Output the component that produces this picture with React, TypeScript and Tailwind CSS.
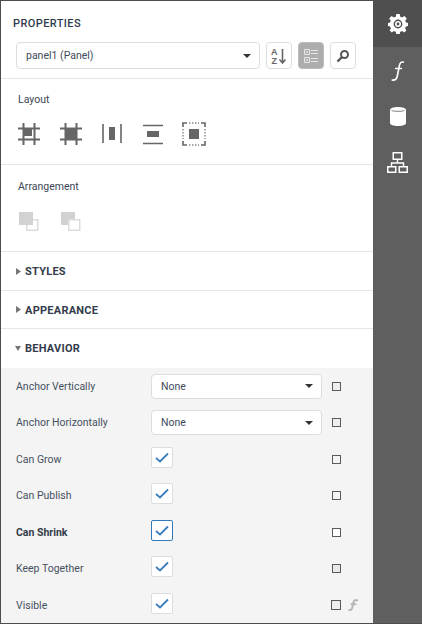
import React from "react";

const font = { fontFamily: 'Roboto, "Open Sans", sans-serif' };

function Caret({ color = "#333" }: { color?: string }) {
  return (
    <svg width="8" height="4" viewBox="0 0 8 4" className="block">
      <path d="M0 0H8L4 4Z" fill={color} />
    </svg>
  );
}

function Select({ text, className }: { text: string; className: string }) {
  return (
    <div className={`flex items-center justify-between border border-[#dddddd] rounded-[4px] bg-white pl-[9px] pr-[8px] text-[10.5px] text-[#3f4a5c] ${className}`}>
      <span className="pt-[1px]">{text}</span>
      <Caret />
    </div>
  );
}

function Section({ title, open, className, textClass }: { title: string; open?: boolean; className: string; textClass: string }) {
  return (
    <div className={`flex items-center pl-[14px] border-b border-[#e6e6e6] ${className}`}>
      <svg width="6" height="7" viewBox="0 0 6 7" className="mr-[4px]">
        {open ? <path d="M0 1H6L3 6Z" fill="#777" /> : <path d="M1 0L6 3.5L1 7Z" fill="#777" />}
      </svg>
      <span className={`text-[11px] font-bold text-[#333c4a] tracking-[0.25px] ${textClass}`}>{title}</span>
    </div>
  );
}

function LayoutIcon({ kind }: { kind: number }) {
  const c = "#666666";
  if (kind === 0 || kind === 1) {
    return (
      <svg width="22" height="22" viewBox="0 0 22 22" className="block">
        <path d="M5.5 0V22M16.5 0V22M0 5.5H22M0 16.5H22" stroke={c} strokeWidth="2" fill="none" />
        {kind === 0 ? <rect x="5" y="5" width="9" height="8" fill={c} /> : <rect x="5" y="5" width="12" height="12" fill={c} />}
      </svg>
    );
  }
  if (kind === 2) {
    return (
      <svg width="20" height="22" viewBox="0 0 20 22" className="block">
        <path d="M1 1V20M19 1V20" stroke={c} strokeWidth="1.6" />
        <rect x="7" y="4" width="6" height="13" fill={c} />
      </svg>
    );
  }
  if (kind === 3) {
    return (
      <svg width="20" height="22" viewBox="0 0 20 22" className="block">
        <path d="M0 2.5H20M0 20.5H20" stroke={c} strokeWidth="1.6" />
        <rect x="4" y="8" width="12" height="6" fill={c} />
      </svg>
    );
  }
  return (
    <svg width="24" height="24" viewBox="0 0 24 24" className="block">
      <path d="M1 5V1H5M19 1H23V5M23 19V23H19M5 23H1V19" stroke={c} strokeWidth="1.6" fill="none" />
      <path d="M7 1H17M7 23H17M1 7V17M23 7V17" stroke="#888" strokeWidth="1.4" strokeDasharray="1.5 1.5" fill="none" />
      <rect x="7" y="7" width="10" height="10" fill={c} />
    </svg>
  );
}

function ArrangeIcon({ front }: { front?: boolean }) {
  return (
    <svg width="20" height="19" viewBox="0 0 20 19" className="block">
      {front ? (
        <>
          <rect x="7.75" y="7.75" width="11" height="10.5" fill="#fff" stroke="#dcdcdc" strokeWidth="1.5" />
          <rect x="0" y="0" width="14" height="13" fill="#d2d2d2" />
        </>
      ) : (
        <>
          <rect x="0" y="0" width="14" height="13" fill="#d2d2d2" />
          <rect x="7.75" y="7.75" width="11" height="10.5" fill="#fff" stroke="#dcdcdc" strokeWidth="1.5" />
        </>
      )}
    </svg>
  );
}

function Check({ focused }: { focused?: boolean }) {
  return (
    <div className={`w-[22px] h-[21px] mb-[4px] flex items-center justify-center bg-white rounded-[2px] border ${focused ? "border-[#337ab7]" : "border-[#dddddd]"}`}>
      <svg width="14" height="11" viewBox="0 0 14 11">
        <path d="M1 6L5 9.5L13 1.5" stroke="#3a7dbd" strokeWidth="1.8" fill="none" />
      </svg>
    </div>
  );
}

const rows = [
  { label: "Anchor Vertically", select: true, fill: "bg-[#eeeeee]", h: "h-[36px]" },
  { label: "Anchor Horizontally", select: true, fill: "bg-[#eeeeee]", h: "h-[37px]" },
  { label: "Can Grow", fill: "bg-[#f4f4f4]", h: "h-[36px]" },
  { label: "Can Publish", fill: "bg-[#f4f4f4]", h: "h-[37px]" },
  { label: "Can Shrink", bold: true, focused: true, fill: "bg-white", h: "h-[36px]" },
  { label: "Keep Together", fill: "bg-[#e8e8e8]", h: "h-[37px]" },
  { label: "Visible", fill: "bg-[#eeeeee]", f: true, h: "h-[36px]" },
];

function Row({ r }: { r: (typeof rows)[number] }) {
  return (
    <div className={`flex items-center ${r.h}`}>
      <div className={`w-[150px] pl-[15px] pt-[1px] text-[10.5px] whitespace-nowrap ${r.bold ? "font-bold text-[#333c4a]" : "text-[#46505f]"}`}>{r.label}</div>
      <div className="w-[171px]">
        {r.select ? <Select text="None" className="h-[25px] w-[171px]" /> : <Check focused={r.focused} />}
      </div>
      <div className="flex items-center pl-[9px]">
        <div className={`border border-[#5a5a5a] ${r.fill} ${r.f ? "w-[10px] h-[10px]" : "w-[9px] h-[9px] ml-[1px]"}`} />
        {r.f && (
          <svg width="11" height="12" viewBox="0 0 11 12" className="ml-[7px]">
            <path d="M10 1.2H7.4C6.4 1.2 5.9 1.8 5.6 3L4 9.5C3.7 10.6 3 11 1.8 11H0.6" stroke="#b5b5b5" strokeWidth="2" fill="none" />
            <path d="M2.6 5.2H8.4" stroke="#b5b5b5" strokeWidth="1.8" />
          </svg>
        )}
      </div>
    </div>
  );
}

export default function App() {
  return (
    <div className="w-[422px] h-[624px] flex flex-col overflow-hidden bg-white border-t border-b border-l border-[#4d4d4d]" style={font}>
      <div className="flex flex-1 min-h-0">
        <div className="w-[372px] flex flex-col">
          <div className="h-[78px] border-b border-[#e6e6e6] px-[12px] shrink-0">
            <div className="pt-[15px] text-[11px] leading-[16px] font-medium text-[#2f3a4d] tracking-[0.4px]">PROPERTIES</div>
            <div className="mt-[10px] flex items-center pl-[3px]">
              <Select text="panel1 (Panel)" className="w-[244px] h-[27px]" />
              <div className="ml-[6px] w-[26px] h-[27px] border border-[#dddddd] rounded-[4px] flex items-center justify-center">
                <svg width="16" height="16" viewBox="0 0 16 16">
                  <text x="0" y="7" fontSize="9" fontWeight="700" fill="#666" fontFamily="Liberation Sans, sans-serif">A</text>
                  <text x="0.5" y="15.5" fontSize="9" fontWeight="700" fill="#666" fontFamily="Liberation Sans, sans-serif">Z</text>
                  <path d="M11.5 1V14M8.5 11.5L11.5 15L14.5 11.5" stroke="#666" strokeWidth="1.6" fill="none" />
                </svg>
              </div>
              <div className="ml-[6px] w-[26px] h-[27px] bg-[#adadad] border border-[#bbbbbb] rounded-[4px] flex items-center justify-center">
                <svg width="16" height="16" viewBox="0 0 16 16">
                  <path d="M1.5 1.5H6.5V6.5H1.5ZM1.5 9.5H6.5V14.5H1.5Z" stroke="#e8e8e8" fill="none" />
                  <path d="M3 4H5M4 3V5M3 12H5M4 11V13" stroke="#e8e8e8" />
                  <path d="M8 2.5H15M8 5.5H15M8 10.5H15M8 13.5H15" stroke="#e8e8e8" />
                </svg>
              </div>
              <div className="ml-[6px] w-[26px] h-[27px] border border-[#dddddd] rounded-[4px] flex items-center justify-center">
                <svg width="14" height="14" viewBox="0 0 14 14">
                  <circle cx="8.5" cy="5.5" r="3.5" stroke="#555" strokeWidth="2" fill="none" />
                  <path d="M6 8L1.5 12.5" stroke="#555" strokeWidth="2.4" />
                </svg>
              </div>
            </div>
          </div>

          <div className="h-[86px] border-b border-[#e6e6e6] pl-[17px] shrink-0">
            <div className="pt-[13px] text-[10.5px] leading-[16px] text-[#3c4656]">Layout</div>
            <div className="mt-[15px] flex items-start">
              <LayoutIcon kind={0} />
              <div className="ml-[20px]"><LayoutIcon kind={1} /></div>
              <div className="ml-[20px]"><LayoutIcon kind={2} /></div>
              <div className="ml-[21px]"><LayoutIcon kind={3} /></div>
              <div className="ml-[19px] -mt-[1px]"><LayoutIcon kind={4} /></div>
            </div>
          </div>

          <div className="h-[87px] border-b border-[#e6e6e6] pl-[18px] shrink-0">
            <div className="pt-[14px] -ml-[1px] text-[10.5px] leading-[16px] text-[#3c4656]">Arrangement</div>
            <div className="mt-[17px] flex items-center gap-[22px]">
              <ArrangeIcon front />
              <ArrangeIcon />
            </div>
          </div>

          <Section title="STYLES" className="h-[39px] shrink-0" textClass="pt-[2px]" />
          <Section title="APPEARANCE" className="h-[38px] shrink-0" textClass="pt-[3px]" />
          <Section title="BEHAVIOR" open className="h-[39px] shrink-0 border-b-0" textClass="pt-[1px]" />

          <div className="flex-1 bg-[#f4f4f4]">
            {rows.map((r) => (
              <Row key={r.label} r={r} />
            ))}
          </div>
        </div>

        <div className="w-[49px] bg-[#5f5f5f] flex flex-col items-center shrink-0">
          <div className="w-full h-[46px] bg-[#4f4f4f] flex items-center justify-center">
            <svg width="20" height="20" viewBox="0 0 20 20">
              <path
                fillRule="evenodd"
                fill="#fff"
                d="M8.3 0H11.7L12.2 2.7C12.9 2.9 13.5 3.2 14.1 3.6L16.4 2L18.8 4.4L17.2 6.7C17.6 7.3 17.9 7.9 18 8.6L20 8.9V12L17.9 12.4C17.7 13.1 17.4 13.7 17 14.3L18.4 16.4L16.2 18.6L14.1 17C13.5 17.4 12.9 17.7 12.2 17.8L11.7 20H8.3L7.8 17.8C7.1 17.6 6.5 17.4 5.9 17L3.8 18.6L1.6 16.4L3 14.3C2.6 13.7 2.3 13.1 2.1 12.4L0 12V8.9L2 8.6C2.2 7.9 2.4 7.3 2.8 6.7L1.2 4.4L3.6 2L5.9 3.6C6.5 3.2 7.1 2.9 7.8 2.7ZM10 5.6A4.4 4.4 0 1 0 10 14.4A4.4 4.4 0 1 0 10 5.6Z"
              />
              <path fillRule="evenodd" fill="#fff" d="M10 7A3 3 0 1 0 10 13A3 3 0 1 0 10 7ZM10 8.6A1.4 1.4 0 1 1 10 11.4A1.4 1.4 0 1 1 10 8.6Z" />
            </svg>
          </div>
          <div className="mt-[14px] h-[20px] flex items-center justify-center">
            <svg width="14" height="20" viewBox="0 0 14 20" className="block">
              <path d="M13 1.2C10.5 0.4 9 1.4 8.4 4.5L6.2 15.5C5.6 18.5 4 19.6 0.6 19" stroke="#fff" strokeWidth="1.6" fill="none" />
              <path d="M4 7.5H11" stroke="#fff" strokeWidth="1.4" />
            </svg>
          </div>
          <div className="mt-[26px] h-[19px] flex items-center justify-center">
            <svg width="16" height="19" viewBox="0 0 16 19" className="block">
              <path d="M0 3C0 1 3.5 0 8 0S16 1 16 3V16C16 18 12.5 19 8 19S0 18 0 16Z" fill="#fff" />
              <path d="M1.5 3.4C3 4.6 13 4.6 14.5 3.4" stroke="#5f5f5f" strokeWidth="0.8" fill="none" />
            </svg>
          </div>
          <div className="mt-[26px] h-[21px] flex items-center justify-center">
            <svg width="21" height="21" viewBox="0 0 21 21" className="block">
              <path d="M6.25 0.75H14.75V7.25H6.25ZM0.75 14.75H8.75V20.25H0.75ZM12.25 14.75H20.25V20.25H12.25Z" stroke="#fff" strokeWidth="1.5" fill="none" />
              <path d="M10.5 7.5V11M4.5 14.5V11H16.5V14.5" stroke="#fff" strokeWidth="1.4" fill="none" />
            </svg>
          </div>
        </div>
      </div>
    </div>
  );
}
